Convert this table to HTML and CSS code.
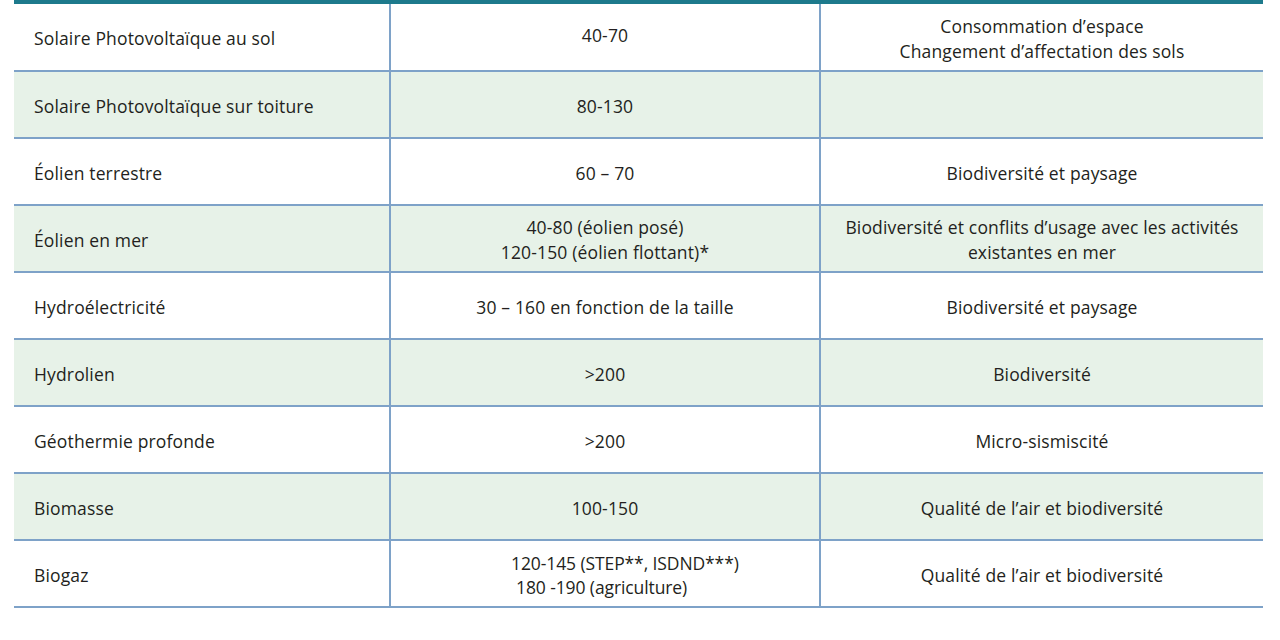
FILE: index.html
```html
<!DOCTYPE html>
<html lang="fr">
<head>
<meta charset="utf-8">
<title>Énergies renouvelables</title>
<link rel="stylesheet" href="styles.css">
</head>
<body>
<div class="wrap">
  <div class="topbar"></div>
  <table class="grid">
    <colgroup>
      <col class="c1"><col class="c2"><col class="c3">
    </colgroup>
    <tbody>
      <tr>
        <td class="name">Solaire Photovoltaïque au sol</td>
        <td class="mid up">40-70</td>
        <td class="imp">Consommation d’espace<br>Changement d’affectation des sols</td>
      </tr>
      <tr class="alt">
        <td class="name">Solaire Photovoltaïque sur toiture</td>
        <td class="mid">80-130</td>
        <td class="imp"></td>
      </tr>
      <tr>
        <td class="name">Éolien terrestre</td>
        <td class="mid">60 – 70</td>
        <td class="imp">Biodiversité et paysage</td>
      </tr>
      <tr class="alt">
        <td class="name">Éolien en mer</td>
        <td class="mid">40-80 (éolien posé)<br>120-150 (éolien flottant)*</td>
        <td class="imp">Biodiversité et conflits d’usage avec les activités<br>existantes en mer</td>
      </tr>
      <tr>
        <td class="name">Hydroélectricité</td>
        <td class="mid">30 – 160 en fonction de la taille</td>
        <td class="imp">Biodiversité et paysage</td>
      </tr>
      <tr class="alt">
        <td class="name">Hydrolien</td>
        <td class="mid">&gt;200</td>
        <td class="imp">Biodiversité</td>
      </tr>
      <tr>
        <td class="name">Géothermie profonde</td>
        <td class="mid">&gt;200</td>
        <td class="imp">Micro-sismiscité</td>
      </tr>
      <tr class="alt">
        <td class="name">Biomasse</td>
        <td class="mid">100-150</td>
        <td class="imp">Qualité de l’air et biodiversité</td>
      </tr>
      <tr>
        <td class="name">Biogaz</td>
        <td class="mid left">120-145 (STEP**, ISDND***)<br><span class="indent">180 -190 (agriculture)</span></td>
        <td class="imp">Qualité de l’air et biodiversité</td>
      </tr>
    </tbody>
  </table>
</div>
</body>
</html>
```
FILE: styles.css
```css
html, body {
  margin: 0;
  padding: 0;
  background: #ffffff;
}
body {
  font-family: "Open Sans", "Liberation Sans", sans-serif;
  color: #231f20;
  font-size: 17.5px;
  letter-spacing: 0.15px;
}
.wrap {
  margin-left: 14px;
  width: 1249px;
}
.topbar {
  height: 4px;
  background: #1d7a8c;
}
.grid {
  width: 1249px;
  border-collapse: collapse;
  table-layout: fixed;
}
.c1 { width: 376px; }
.c2 { width: 430px; }
.c3 { width: 443px; }
.grid td {
  height: 67px;
  box-sizing: border-box;
  border-bottom: 2px solid #7ea2c8;
  padding: 3px 0 0 0;
  line-height: 25px;
  vertical-align: middle;
}
.grid tr.alt td {
  background: #e7f2e8;
}
.grid td.name {
  padding-left: 20px;
  border-right: 2px solid #7ea2c8;
}
.grid td.mid {
  text-align: center;
  border-right: 2px solid #7ea2c8;
}
.grid td.mid.up {
  padding-top: 0;
  padding-bottom: 4px;
}
.grid td.mid.left {
  text-align: left;
  padding-left: 120px;
  line-height: 24px;
  letter-spacing: -0.1px;
}
.indent {
  padding-left: 5px;
}
.grid td.imp {
  text-align: center;
}
```
